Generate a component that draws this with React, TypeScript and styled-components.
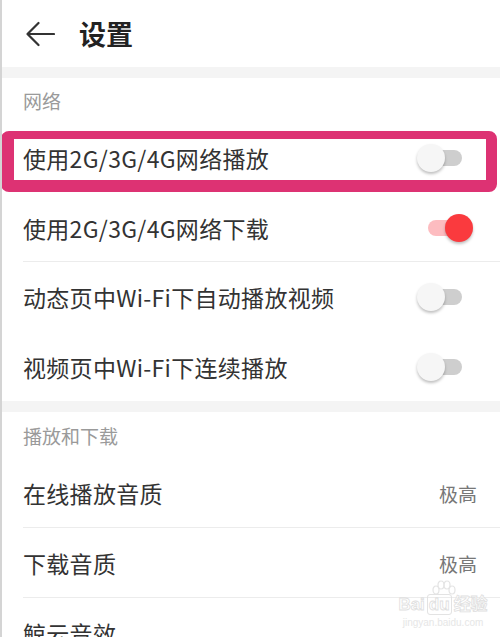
import React from 'react'
import styled, { createGlobalStyle } from 'styled-components'

const GlobalStyle = createGlobalStyle`
  html, body {
    margin: 0;
    padding: 0;
    background: #ffffff;
  }
  body {
    font-family: "Noto Sans CJK SC", "Noto Sans", sans-serif;
  }
`

type ToggleItem = { label: string; on: boolean; height: number; divider?: boolean; highlight?: boolean }
type ValueItem = { label: string; value?: string; divider?: boolean }

const networkItems: ToggleItem[] = [
  { label: '使用2G/3G/4G网络播放', on: false, height: 70, highlight: true },
  { label: '使用2G/3G/4G网络下载', on: true, height: 69, divider: true },
  { label: '动态页中Wi-Fi下自动播放视频', on: false, height: 70 },
  { label: '视频页中Wi-Fi下连续播放', on: false, height: 69 },
]

const playItems: ValueItem[] = [
  { label: '在线播放音质', value: '极高', divider: true },
  { label: '下载音质', value: '极高', divider: true },
  { label: '鲸云音效' },
]

const BackArrow = () => (
  <svg width='30' height='26' viewBox='0 0 30 26' fill='none'>
    <path
      d='M29 13H2.5M13.5 2L2.5 13L13.5 24'
      stroke='#333'
      strokeWidth='2.2'
      strokeLinecap='round'
      strokeLinejoin='round'
    />
  </svg>
)

const Paw = () => (
  <svg width='30' height='20' viewBox='0 0 30 20' fill='none' stroke='#e2e2e2' strokeWidth='1.2'>
    <ellipse cx='8' cy='10' rx='3' ry='4' />
    <ellipse cx='13' cy='5' rx='3' ry='4' />
    <ellipse cx='19' cy='5' rx='3' ry='4' />
    <ellipse cx='24' cy='10' rx='3' ry='4' />
  </svg>
)

const App = () => {
  return (
    <>
      <GlobalStyle />
      <Page>
        <Header>
          <BackArrow />
          <Title>设置</Title>
        </Header>
        <Band />
        <SectionTitle>网络</SectionTitle>
        {networkItems.map((item) => (
          <Row key={item.label} $height={item.height} $divider={item.divider}>
            <Label>{item.label}</Label>
            <Switch>
              <Track $on={item.on} />
              <Knob $on={item.on} />
            </Switch>
            {item.highlight && <Highlight />}
          </Row>
        ))}
        <Band />
        <SectionTitle $tall>播放和下载</SectionTitle>
        {playItems.map((item) => (
          <Row key={item.label} $height={70} $divider={item.divider}>
            <Label>{item.label}</Label>
            {item.value && <Value>{item.value}</Value>}
          </Row>
        ))}
        <Watermark>
          <Paw />
          <MarkText>
            Bai<MarkBox>du</MarkBox>经验
          </MarkText>
          <MarkUrl>jingyan.baidu.com</MarkUrl>
        </Watermark>
      </Page>
    </>
  )
}

const Page = styled.div`
  position: relative;
  width: 500px;
  height: 637px;
  overflow: hidden;
  box-sizing: border-box;
  border-left: 2px solid #d4d4d4;
  background: #ffffff;
`

const Header = styled.div`
  height: 67px;
  display: flex;
  align-items: center;
  padding-left: 23px;
  gap: 24px;
  box-sizing: border-box;
`

const Title = styled.h1`
  margin: 0;
  font-size: 27px;
  font-weight: 700;
  color: #222;
  line-height: 1;
`

const Band = styled.div`
  height: 11px;
  background: #f4f4f4;
`

const SectionTitle = styled.div<{ $tall?: boolean }>`
  height: ${(p) => (p.$tall ? '46px' : '45px')};
  display: flex;
  align-items: center;
  padding-left: 21px;
  font-size: 19px;
  color: #9a9a9a;
`

const Row = styled.div<{ $height: number; $divider?: boolean }>`
  position: relative;
  height: ${(p) => p.$height}px;
  display: flex;
  align-items: center;
  justify-content: space-between;
  padding: 0 23px 0 21px;
  box-sizing: border-box;

  &::after {
    content: '';
    display: ${(p) => (p.$divider ? 'block' : 'none')};
    position: absolute;
    left: 21px;
    right: 0;
    bottom: 0;
    height: 1px;
    background: #ececec;
  }
`

const Label = styled.span`
  font-size: 23px;
  color: #333;
  letter-spacing: 0.3px;
`

const Value = styled.span`
  font-size: 19px;
  color: #777;
`

const Switch = styled.div`
  position: relative;
  width: 56px;
  height: 28px;
  margin-right: 4px;
`

const Track = styled.div<{ $on: boolean }>`
  position: absolute;
  left: 11px;
  top: 6px;
  width: 34px;
  height: 16px;
  border-radius: 8px;
  background: ${(p) => (p.$on ? '#fdbcc0' : '#cecece')};
`

const Knob = styled.div<{ $on: boolean }>`
  position: absolute;
  top: 0;
  left: ${(p) => (p.$on ? '28px' : '0')};
  width: 28px;
  height: 28px;
  border-radius: 50%;
  background: ${(p) => (p.$on ? '#fa3a3e' : '#f6f6f6')};
  box-shadow: 0 2px 3px rgba(0, 0, 0, 0.25);
`

const Highlight = styled.div`
  position: absolute;
  left: -1px;
  right: 3px;
  top: 8px;
  height: 61px;
  box-sizing: border-box;
  border-style: solid;
  border-color: #dd3273;
  border-width: 8px 11px 12px 13px;
  border-radius: 8px;
  pointer-events: none;
`

const Watermark = styled.div`
  position: absolute;
  left: 396px;
  top: 580px;
  width: 90px;
  display: flex;
  flex-direction: column;
  align-items: center;
  opacity: 0.9;
`

const MarkText = styled.div`
  font-family: "Liberation Sans", "Noto Sans CJK SC", sans-serif;
  font-size: 17px;
  font-weight: 700;
  color: #ffffff;
  -webkit-text-stroke: 0.8px #dcdcdc;
  line-height: 18px;
  margin-top: -4px;
`

const MarkBox = styled.span`
  border: 1px solid #e0e0e0;
  border-radius: 3px;
  padding: 0 1px;
  margin: 0 2px;
`

const MarkUrl = styled.div`
  font-family: "Liberation Sans", sans-serif;
  font-size: 10px;
  color: #e4e4e4;
  margin-top: 3px;
`

export default App
